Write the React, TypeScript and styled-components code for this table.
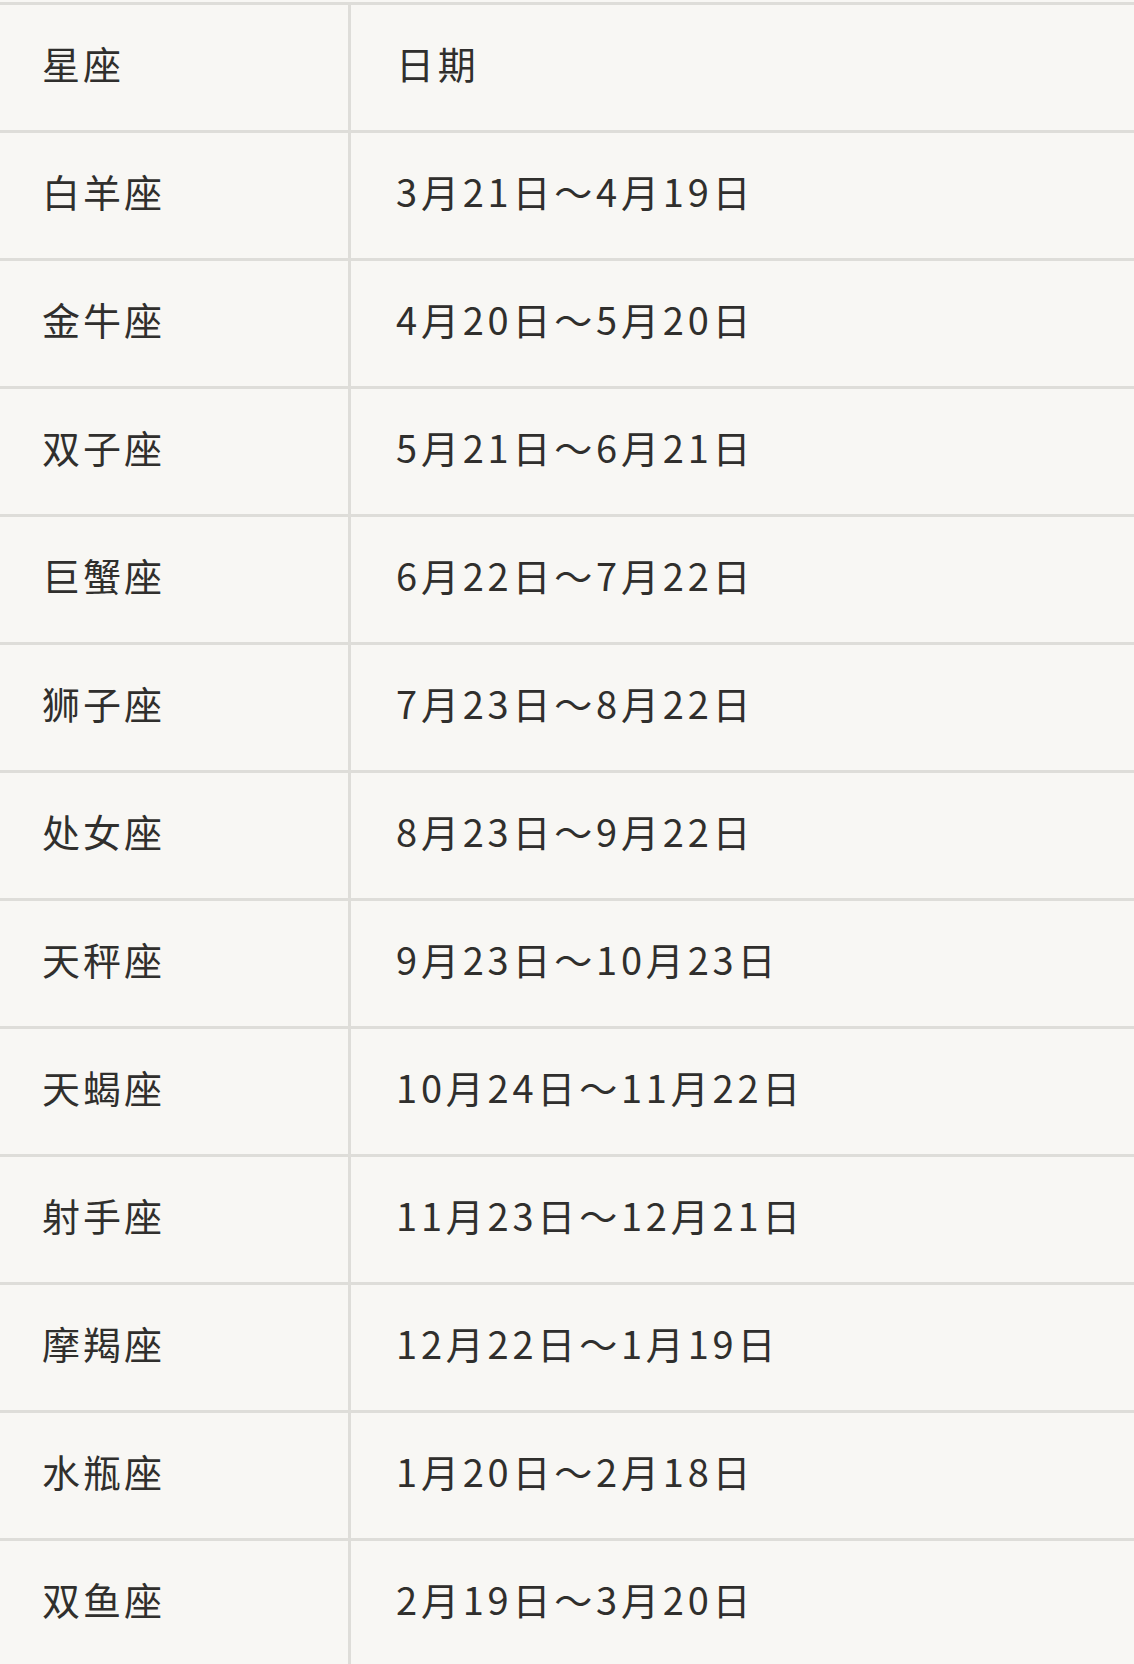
import React from "react";
import styled, { createGlobalStyle } from "styled-components";

type Sign = { name: string; dates: string };

const signs: Sign[] = [
  { name: "白羊座", dates: "3月21日～4月19日" },
  { name: "金牛座", dates: "4月20日～5月20日" },
  { name: "双子座", dates: "5月21日～6月21日" },
  { name: "巨蟹座", dates: "6月22日～7月22日" },
  { name: "狮子座", dates: "7月23日～8月22日" },
  { name: "处女座", dates: "8月23日～9月22日" },
  { name: "天秤座", dates: "9月23日～10月23日" },
  { name: "天蝎座", dates: "10月24日～11月22日" },
  { name: "射手座", dates: "11月23日～12月21日" },
  { name: "摩羯座", dates: "12月22日～1月19日" },
  { name: "水瓶座", dates: "1月20日～2月18日" },
  { name: "双鱼座", dates: "2月19日～3月20日" },
];

const GlobalStyle = createGlobalStyle`
  html, body {
    margin: 0;
    padding: 0;
    background: #f8f7f4;
  }
  body {
    font-family: "Noto Sans CJK SC", "Noto Sans", sans-serif;
    color: #302f2d;
  }
`;

const Table = styled.div`
  margin-top: 2px;
  overflow: hidden;
`;

const Row = styled.div`
  display: grid;
  grid-template-columns: 351px 1fr;
  height: 128px;
  box-sizing: border-box;
  border-top: 3px solid #deddd9;
`;

const Cell = styled.div<{ $first?: boolean }>`
  display: flex;
  align-items: center;
  box-sizing: border-box;
  padding: 0 0 10px ${({ $first }) => ($first ? "42px" : "45px")};
  border-right: ${({ $first }) => ($first ? "3px solid #deddd9" : "none")};
  font-size: 38px;
  letter-spacing: ${({ $first }) => ($first ? "3px" : "3.8px")};
  font-weight: 400;
  white-space: nowrap;
`;

const App: React.FC = () => (
  <>
    <GlobalStyle />
    <Table>
      <Row>
        <Cell $first>星座</Cell>
        <Cell>日期</Cell>
      </Row>
      {signs.map(sign => (
        <Row key={sign.name}>
          <Cell $first>{sign.name}</Cell>
          <Cell>{sign.dates}</Cell>
        </Row>
      ))}
    </Table>
  </>
);

export default App;
